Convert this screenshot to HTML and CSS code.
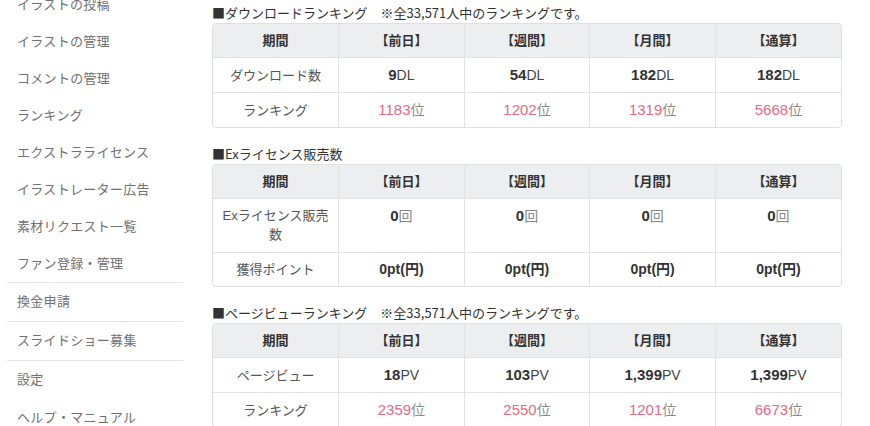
FILE: index.html
```html
<!DOCTYPE html>
<html lang="ja">
<head>
<meta charset="utf-8">
<link rel="stylesheet" href="styles.css">
</head>
<body>
<div class="page">
  <nav class="side">
    <ul class="menu">
      <li class="item">イラストの投稿</li>
      <li class="item">イラストの管理</li>
      <li class="item">コメントの管理</li>
      <li class="item">ランキング</li>
      <li class="item">エクストラライセンス</li>
      <li class="item">イラストレーター広告</li>
      <li class="item">素材リクエスト一覧</li>
      <li class="item">ファン登録・管理</li>
      <li class="item sep">換金申請</li>
      <li class="item sep">スライドショー募集</li>
      <li class="item sep">設定</li>
      <li class="item">ヘルプ・マニュアル</li>
    </ul>
  </nav>
  <main class="main">
    <section class="block">
      <h2 class="title">■ダウンロードランキング　※全33,571人中のランキングです。</h2>
      <div class="box">
        <table class="tbl">
          <tr class="head"><th>期間</th><th>【前日】</th><th>【週間】</th><th>【月間】</th><th>【通算】</th></tr>
          <tr><td class="lbl">ダウンロード数</td><td><b class="n">9</b><span class="u">DL</span></td><td><b class="n">54</b><span class="u">DL</span></td><td><b class="n">182</b><span class="u">DL</span></td><td><b class="n">182</b><span class="u">DL</span></td></tr>
          <tr><td class="lbl">ランキング</td><td><span class="r">1183</span><span class="g">位</span></td><td><span class="r">1202</span><span class="g">位</span></td><td><span class="r">1319</span><span class="g">位</span></td><td><span class="r">5668</span><span class="g">位</span></td></tr>
        </table>
      </div>
    </section>
    <section class="block">
      <h2 class="title">■Exライセンス販売数</h2>
      <div class="box">
        <table class="tbl">
          <tr class="head"><th>期間</th><th>【前日】</th><th>【週間】</th><th>【月間】</th><th>【通算】</th></tr>
          <tr class="top"><td class="lbl">Exライセンス販売数</td><td><b class="n">0</b><span class="g">回</span></td><td><b class="n">0</b><span class="g">回</span></td><td><b class="n">0</b><span class="g">回</span></td><td><b class="n">0</b><span class="g">回</span></td></tr>
          <tr><td class="lbl">獲得ポイント</td><td><b class="p">0pt(円)</b></td><td><b class="p">0pt(円)</b></td><td><b class="p">0pt(円)</b></td><td><b class="p">0pt(円)</b></td></tr>
        </table>
      </div>
    </section>
    <section class="block">
      <h2 class="title">■ページビューランキング　※全33,571人中のランキングです。</h2>
      <div class="box">
        <table class="tbl">
          <tr class="head"><th>期間</th><th>【前日】</th><th>【週間】</th><th>【月間】</th><th>【通算】</th></tr>
          <tr><td class="lbl">ページビュー</td><td><b class="n">18</b><span class="u">PV</span></td><td><b class="n">103</b><span class="u">PV</span></td><td><b class="n">1,399</b><span class="u">PV</span></td><td><b class="n">1,399</b><span class="u">PV</span></td></tr>
          <tr><td class="lbl">ランキング</td><td><span class="r">2359</span><span class="g">位</span></td><td><span class="r">2550</span><span class="g">位</span></td><td><span class="r">1201</span><span class="g">位</span></td><td><span class="r">6673</span><span class="g">位</span></td></tr>
        </table>
      </div>
    </section>
  </main>
</div>
</body>
</html>
```
FILE: styles.css
```css
html, body {
  margin: 0;
  padding: 0;
  background: #fff;
}
body {
  font-family: "Liberation Sans", "Noto Sans CJK JP", sans-serif;
  color: #333;
  font-size: 13px;
  overflow: hidden;
  height: 426px;
}
.page {
  display: flex;
  align-items: flex-start;
}
.side {
  width: 176px;
  margin-left: 7px;
  margin-top: -14px;
  flex: none;
}
.menu {
  list-style: none;
  margin: 0;
  padding: 0;
}
.item {
  height: 37px;
  line-height: 37px;
  padding-left: 10px;
  color: #707070;
  font-size: 13px;
  letter-spacing: 0.3px;
}
.item.sep {
  border-top: 1px solid #e6e6e6;
  height: 38px;
  line-height: 38px;
}
.main {
  margin-left: 29px;
  width: 630px;
  padding-top: 3px;
}
.block {
  margin-bottom: 16px;
}
.title {
  margin: 0;
  font-family: "Noto Sans CJK JP", sans-serif;
  font-size: 13px;
  font-weight: normal;
  line-height: 20px;
  color: #333;
  white-space: nowrap;
}
.box {
  border: 1px solid #e0e0e0;
  border-radius: 4px;
  overflow: hidden;
}
.tbl {
  width: 100%;
  border-collapse: collapse;
  table-layout: fixed;
}
.tbl th, .tbl td {
  border-left: 1px solid #e3e3e3;
  border-top: 1px solid #e3e3e3;
  text-align: center;
  vertical-align: middle;
  padding: 7px 10px;
  line-height: 19px;
  font-size: 13px;
}
.tbl tr:first-child th { border-top: none; }
.tbl th:first-child, .tbl td:first-child { border-left: none; }
.head th {
  background: #eceeef;
  font-weight: bold;
  color: #333;
}
.tbl .top td {
  vertical-align: top;
  padding-bottom: 8px;
}
.tbl .lbl {
  color: #555;
  padding-left: 6px;
  padding-right: 6px;
}
.n {
  font-weight: bold;
  font-size: 15px;
  color: #333;
}
.u {
  font-size: 14px;
  color: #444;
}
.r {
  font-size: 15px;
  color: #e46a85;
}
.g {
  font-size: 14px;
  color: #888;
}
.p {
  font-weight: bold;
  font-size: 14px;
  color: #333;
}
```
